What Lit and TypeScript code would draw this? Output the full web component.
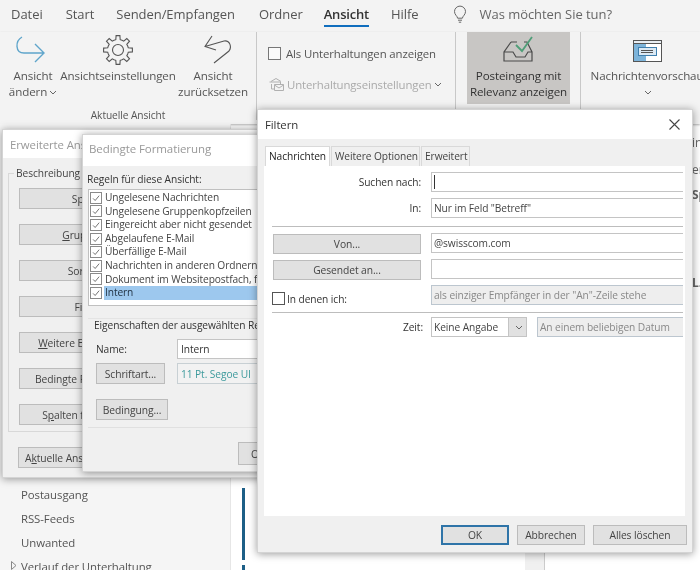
import { LitElement, html, css } from "lit";
import { customElement } from "lit/decorators.js";

function gearPath(cx: number, cy: number, ro: number, ri: number, n: number) {
  const pts: string[] = [];
  for (let i = 0; i < n; i++) {
    const step = (Math.PI * 2) / n;
    const a = i * step - Math.PI / 2;
    const seq: [number, number][] = [
      [ri, a - step * 0.5],
      [ri, a - step * 0.27],
      [ro, a - step * 0.17],
      [ro, a + step * 0.17],
      [ri, a + step * 0.27],
    ];
    for (const [r, t] of seq) pts.push(`${(cx + r * Math.cos(t)).toFixed(1)} ${(cy + r * Math.sin(t)).toFixed(1)}`);
  }
  return "M" + pts.join("L") + "Z";
}

const check = html`<svg class="ck" viewBox="0 0 12 12"><path d="M2.500 6.500 5 9l4.800-5.800" fill="none" stroke="#666" stroke-width="1.100"/></svg>`;
const chev = html`<svg class="chev" viewBox="0 0 8 5"><path d="M1 1l3 3 3-3" fill="none" stroke="#666" stroke-width="1"/></svg>`;

@customElement("app-root")
export class AppRoot extends LitElement {
  static styles = css`
    :host { display: block; width: 700px; height: 570px; }
    * { box-sizing: border-box; }
    .app { position: relative; width: 700px; height: 570px; overflow: hidden; background: #fff; color: #444;
      font-family: "Open Sans", "Noto Sans", sans-serif; font-size: 10.2px; letter-spacing: -0.08px; display: flex; flex-direction: column; filter: blur(0.3px); }
    .tabs { height: 32px; background: #f3f3f3; display: flex; align-items: flex-start; padding: 5px 0 0 11px; font-size: 13px; letter-spacing: -0.05px; flex: none; }
    .tab { line-height: 18px; height: 22px; color: #555; }
    .tab.on { color: #333; font-weight: 600; border-bottom: 2px solid #106ebe; letter-spacing: -.2px; }
    .t1 { margin-right: 23px; } .t2 { margin-right: 22px; } .t3 { margin-right: 24px; } .t4 { margin-right: 21px; } .t5 { margin-right: 22px; } .t6 { margin-right: 34px; }
    .bulb { width: 14px; height: 20px; margin-right: 13px; margin-top: 0; }
    .ask { line-height: 18px; color: #666; font-size: 13px; }
    .ribbon { height: 92px; background: #f3f3f3; display: flex; flex: none; box-shadow: 0 1px 2px rgba(0,0,0,.3); position: relative; }
    .grp { border-right: 1px solid #c8c8c8; height: 88px; flex: none; }
    .g1 { width: 257px; position: relative; } .g2 { width: 199px; padding: 13px 0 0 11px; } .g3 { width: 125px; padding-left: 11px; } .g4 { flex: 1; border: none; }
    .g1row { display: flex; }
    .rb { display: flex; flex-direction: column; align-items: center; text-align: center; line-height: 16px; font-size: 11.6px; letter-spacing: -.12px; color: #555; height: 72px; }
    .rb svg.ic { height: 36px; flex: none; display: block; }
    .b1 { width: 62px; margin-left: 2px; } .b2 { width: 114px; margin-left: -3px; } .b3 { width: 82px; margin-left: -3px; }
    .glabel { text-align: center; font-size: 10.2px; color: #555; line-height: 14px; margin-top: 4px; }
    .chev { width: 8px; height: 5px; display: inline-block; vertical-align: middle; margin-left: 2px; }
    .line { display: flex; align-items: center; height: 16px; font-size: 11.4px; letter-spacing: -.12px; color: #555; white-space: nowrap; }
    .line .box { width: 13px; height: 13px; border: 1px solid #777; background: #fafafa; margin-right: 5px; flex: none; }
    .line.off { margin-top: 15px; color: #aaa; }
    .line.off svg.m { width: 16px; height: 14px; margin-right: 3px; flex: none; }
    .hot { width: 103px; height: 72px; background: #c8c6c4; }
    .hot.rb { color: #333; }
    .g4 .rb { width: 120px; margin-left: 6px; overflow: hidden; white-space: nowrap; }
    .below { flex: 1; display: flex; min-height: 0; }
    .side { width: 231px; background: #f5f5f5; border-right: 1px solid #e6e6e6; padding: 358px 0 0 21px; font-size: 11.4px; flex: none; color: #555; position: relative; }
    .side div { height: 24px; line-height: 25px; white-space: nowrap; }
    .tri { position: absolute; left: 11px; top: 437px; width: 6px; height: 9px; }
    .list { width: 294px; padding: 364px 0 0 11px; background: #fff; flex: none; }
    .bar { width: 3px; height: 72px; background: #1d5f87; margin-bottom: 5px; }
    .scroll { width: 20px; background: #f0f0f0; border-right: 1px solid #ccc; flex: none; }
    .right { flex: 1; font-size: 12px; white-space: nowrap; overflow: hidden; position: relative; }
    .far { position: absolute; left: 147px; white-space: nowrap; color: #666; }
    .f1 { top: 10px; } .f2 { top: 37px; } .f3 { top: 62px; font-weight: 700; } .f4 { top: 150px; font-weight: 700; }
    .win { position: absolute; background: #f0f0f0; box-shadow: 0 1px 8px rgba(0,0,0,.4); border: 1px solid #d4d4d4; overflow: hidden; }
    .title { height: 28px; background: #fff; padding-left: 7px; line-height: 30px; font-size: 11.4px; color: #999; white-space: nowrap; }
    .btn { background: #e1e1e1; border: 1px solid #bcbcbc; display: flex; align-items: center; justify-content: center; white-space: nowrap; color: #444; height: 21px; font-size: 10.3px; }
    u { text-decoration: underline; }
    .erw { left: 2px; top: 129px; width: 260px; height: 349px; }
    .erw .fs { border: 1px solid #d8d8d8; margin: 15px 0 0 5px; width: 245px; height: 259px; padding: 14px 0 0 10px; position: relative; }
    .fs .lg { position: absolute; top: -8px; left: 5px; background: #f0f0f0; padding: 0 2px; line-height: 15px; }
    .erw .btn { width: 149px; margin-bottom: 15px; }
    .erw .btn.last { width: 156px; margin: 15px 0 0 15px; justify-content: flex-start; padding-left: 6px; }
    .bed { left: 82px; top: 134px; width: 260px; height: 338px; }
    .bed .title { height: 31px; line-height: 28px; font-size: 11.5px; color: #999; padding-left: 6px; }
    .bed .cap { padding: 6px 0 0 4px; line-height: 15px; height: 23px; color: #333; }
    .rules { margin-left: 5px; background: #fff; border: 1px solid #c0c0c0; height: 117px; padding: 1px 0 0 1px; }
    .rule { height: 13.6px; display: flex; align-items: center; white-space: nowrap; font-size: 10.2px; color: #444; letter-spacing: -.1px; }
    .ck { width: 12px; height: 12px; border: 1px solid #8a8a8a; background: #fff; flex: none; margin-right: 2px; }
    .rule span { padding-left: 1px; flex: 1; line-height: 13.6px; }
    .rule.on span { background: #9dc8ee; color: #234; }
    .props { margin: 12px 0 0 5px; border-top: 1px solid #e4e4e4; border-bottom: 1px solid #e0e0e0; height: 110px; padding: 0 0 0 6px; }
    .props .h { line-height: 15px; margin-top: -1px; height: 21px; color: #333; white-space: nowrap; }
    .pr { display: flex; align-items: center; }
    .pr.n { height: 20px; margin-bottom: 4px; color: #333; }
    .pr .nm { width: 83px; padding-left: 2px; }
    .inp { background: #fff; border: 1px solid #c4c4c4; height: 20px; display: flex; align-items: center; padding-left: 3px; white-space: nowrap; flex: 1; }
    .pr .btn { width: 69px; margin: 0 12px 0 2px; height: 21px; }
    .prev { flex: 1; height: 21px; border: 1px solid #c8d0d4; background: #f2f2f2; color: #3d9a9c; display: flex; align-items: center; padding-left: 3px; white-space: nowrap; }
    .btn.bd { width: 72px; margin: 15px 0 0 2px; }
    .bed .foot { width: 40px; height: 23px; margin: 14px 0 0 155px; }
    .fil { left: 257px; top: 109px; width: 436px; height: 444px; display: flex; flex-direction: column; }
    .fil .title { height: 29px; line-height: 29px; font-size: 11.4px; color: #333; display: flex; justify-content: space-between; padding: 0 11px 0 7px; flex: none; }
    .x { width: 13px; height: 13px; margin-top: 8px; }
    .ftabs { display: flex; padding: 7px 0 0 7px; height: 27px; flex: none; }
    .ft { height: 20px; border: 1px solid #d9d9d9; border-bottom: none; line-height: 19px; padding: 0 3px; margin-right: 1px; white-space: nowrap; color: #444; background: #f0f0f0; }
    .ft.on { background: #fff; color: #222; width: 65px; padding-left: 3px; height: 20px; }
    .ft.w { width: 89px; } .ft.e { width: 49px; }
    .panel { margin-left: 6px; width: 421px; height: 350px; background: #fff; padding: 6px 0 0 8px; flex: none; }
    .form { display: grid; grid-template-columns: 149px 252px; column-gap: 10px; row-gap: 6px; grid-auto-rows: min-content; }
    .lab { display: flex; align-items: center; justify-content: flex-end; height: 20px; color: #333; }
    .fld { height: 20px; background: #fff; border: 1px solid #c4c4c4; border-right: none; display: flex; align-items: center; padding-left: 2px; color: #444; white-space: nowrap; }
    .caret { width: 1px; height: 14px; background: #333; }
    .sep { grid-column: 1 / -1; height: 1px; background: #bdbdbd; margin-top: 2px; width: 411px; }
    .sep.t { margin-top: 1px; margin-bottom: -2px; }
    .fld.dis { background: #eeeeee; border: 1px solid #bcc6cf; border-right: none; color: #888; }
    .form .btn { height: 20px; width: 148px; margin: 1px 0 -1px 1px; }
    .chk { display: flex; align-items: center; height: 20px; color: #333; padding-top: 7px; }
    .chk i { width: 13px; height: 13px; border: 1px solid #555; background: #fff; margin-right: 2px; display: block; }
    .zrow { display: flex; gap: 10px; }
    .dd { width: 96px; height: 20px; border: 1px solid #c4c4c4; display: flex; align-items: center; padding-left: 2px; background: #fff; color: #444; flex: none; }
    .dd b { font-weight: 400; flex: 1; }
    .dd em { width: 18px; height: 18px; background: #e1e1e1; border-left: 1px solid #c4c4c4; display: flex; align-items: center; justify-content: center; }
    .zrow .fld { flex: 1; }
    .lab.z { margin-right: -2px; }
    .fbtns { display: flex; padding: 9px 0 0 183px; gap: 8px; }
    .fbtns .btn { width: 68px; height: 20px; }
    .fbtns .btn.ok { border: 2px solid #2f74a8; }
    .fbtns .btn.al { width: 94px; }
  `;

  render() {
    const rules = ["Ungelesene Nachrichten", "Ungelesene Gruppenkopfzeilen", "Eingereicht aber nicht gesendet", "Abgelaufene E-Mail", "Überfällige E-Mail", "Nachrichten in anderen Ordnern", "Dokument im Websitepostfach, für das Aktion erforderlich ist"];
    return html`<div class="app">
      <div class="tabs">
        <div class="tab t1">Datei</div><div class="tab t2">Start</div><div class="tab t3">Senden/Empfangen</div>
        <div class="tab t4">Ordner</div><div class="tab on t5">Ansicht</div><div class="tab t6">Hilfe</div>
        <svg class="bulb" viewBox="0 0 14 20"><path d="M4.600 13.200C4.400 11 1.500 9.800 1.500 6.600a5.500 5.500 0 0 1 11 0c0 3.200-2.900 4.400-3.100 6.600zM5 15.200h4M5.800 17.200h2.400" fill="none" stroke="#666" stroke-width="1"/></svg>
        <div class="ask">Was möchten Sie tun?</div>
      </div>
      <div class="ribbon">
        <div class="grp g1">
          <div class="g1row">
            <div class="rb b1"><svg class="ic" width="62" height="36" viewBox="0 0 62 36"><path d="M20 5C13 9 13 21 22 21H41M33 12l9 9-9 9" fill="none" stroke="#5fa5cb" stroke-width="1.400"/></svg>Ansicht<span>ändern${chev}</span></div>
            <div class="rb b2"><svg class="ic" width="114" height="36" viewBox="0 0 114 36"><path d="${gearPath(57, 18, 14.5, 10.5, 8)}" fill="none" stroke="#555" stroke-width="1.100"/><circle cx="57" cy="18" r="5.500" fill="none" stroke="#555" stroke-width="1.100"/></svg>Ansichtseinstellungen</div>
            <div class="rb b3"><svg class="ic" width="82" height="36" viewBox="0 0 82 36"><path d="M40 4 33 14.500l11 3.500M33 14.500 52 9c6-1 8 6 5 10L42 31" fill="none" stroke="#555" stroke-width="1.100"/></svg>Ansicht<span>zurücksetzen</span></div>
          </div>
          <div class="glabel">Aktuelle Ansicht</div>
        </div>
        <div class="grp g2">
          <div class="line"><span class="box"></span>Als Unterhaltungen anzeigen</div>
          <div class="line off"><svg class="m" viewBox="0 0 16 14"><path d="M3 4.500 8 1.500l5 3M1.500 5h11v2M3.500 7v5h3M6.500 7.500h9v6h-9zM6.500 8l4.500 3 4.500-3" fill="none" stroke="#b0b0b0" stroke-width="1"/></svg>Unterhaltungseinstellungen${chev}</div>
        </div>
        <div class="grp g3">
          <div class="rb hot"><svg class="ic" width="103" height="36" viewBox="0 0 103 36"><path d="M44 10 37 20V29H65V20L60 10H57M44 10H50M37 20h9l3 5h9l3-5h4" fill="none" stroke="#4b4b4b" stroke-width="1.200"/><path d="M49 13l6 6L65 5" fill="none" stroke="#4f9e78" stroke-width="1.800"/></svg>Posteingang mit<span>Relevanz anzeigen</span></div>
        </div>
        <div class="grp g4">
          <div class="rb"><svg class="ic" width="120" height="36" viewBox="0 0 120 36"><rect x="46.500" y="8.500" width="28" height="21" fill="#fff" stroke="#555"/><rect x="46.500" y="8.500" width="28" height="3" fill="#e8eef3" stroke="#555"/><rect x="47" y="12" width="12" height="17" fill="#7db4da"/><rect x="51.500" y="15.500" width="18" height="8" fill="#dbe9f4" stroke="#3f7fae"/><path d="M54 18.500h12M54 20.500h12" stroke="#555"/></svg>Nachrichtenvorschau<span>${chev}</span></div>
        </div>
      </div>
      <div class="below">
        <div class="side"><div>Postausgang</div><div>RSS-Feeds</div><div>Unwanted</div><div>Verlauf der Unterhaltung</div>
          <svg class="tri" viewBox="0 0 6 9"><path d="M.5.5 5 4.500.5 8.500z" fill="none" stroke="#888"/></svg></div>
        <div class="list"><div class="bar"></div><div class="bar"></div></div>
        <div class="scroll"></div>
        <div class="right"><div class="far f1">in</div><div class="far f2">er</div><div class="far f3">Sp</div><div class="far f4">L.</div></div>
      </div>

      <div class="win erw">
        <div class="title">Erweiterte Ansichtseinstellungen: Kompakt</div>
        <div class="fs"><div class="lg">Beschreibung</div>
          <div class="btn">Spalten...</div><div class="btn"><span><u>G</u>ruppieren...</span></div><div class="btn">Sortieren...</div><div class="btn">Filtern...</div>
          <div class="btn"><span><u>W</u>eitere Einstellungen...</span></div><div class="btn">Bedingte Formatierung...</div><div class="btn"><span>S<u>p</u>alten formatieren...</span></div>
        </div>
        <div class="btn last"><span>A<u>k</u>tuelle Ansicht zurücksetzen</span></div>
      </div>

      <div class="win bed">
        <div class="title">Bedingte Formatierung</div>
        <div class="cap">Regeln für diese Ansicht:</div>
        <div class="rules">
          ${rules.map((r) => html`<div class="rule">${check}<span>${r}</span></div>`)}
          <div class="rule on">${check}<span>Intern</span></div>
        </div>
        <div class="props">
          <div class="h">Eigenschaften der ausgewählten Regel</div>
          <div class="pr n"><div class="nm">Name:</div><div class="inp">Intern</div></div>
          <div class="pr"><div class="btn">Schriftart...</div><div class="prev">11 Pt. Segoe UI</div></div>
          <div class="btn bd">Bedingung...</div>
        </div>
        <div class="btn foot">OK</div>
      </div>

      <div class="win fil">
        <div class="title">Filtern<svg class="x" viewBox="0 0 13 13"><path d="M1.500 1.500l10 10M11.500 1.500l-10 10" stroke="#444" stroke-width="1.100" fill="none"/></svg></div>
        <div class="ftabs"><div class="ft on">Nachrichten</div><div class="ft w">Weitere Optionen</div><div class="ft e">Erweitert</div></div>
        <div class="panel">
          <div class="form">
            <div class="lab">Suchen nach:</div><div class="fld"><span class="caret"></span></div>
            <div class="lab">In:</div><div class="fld">Nur im Feld "Betreff"</div>
            <div class="sep"></div>
            <div class="btn">Von...</div><div class="fld">@swisscom.com</div>
            <div class="btn">Gesendet an...</div><div class="fld"></div>
            <div class="chk"><i></i>In denen ich:</div><div class="fld dis">als einziger Empfänger in der "An"-Zeile stehe</div>
            <div class="sep t"></div>
            <div class="lab z">Zeit:</div>
            <div class="zrow">
              <div class="dd"><b>Keine Angabe</b><em>${chev}</em></div>
              <div class="fld dis">An einem beliebigen Datum</div>
            </div>
          </div>
        </div>
        <div class="fbtns"><div class="btn ok">OK</div><div class="btn">Abbrechen</div><div class="btn al">Alles löschen</div></div>
      </div>
    </div>`;
  }
}
